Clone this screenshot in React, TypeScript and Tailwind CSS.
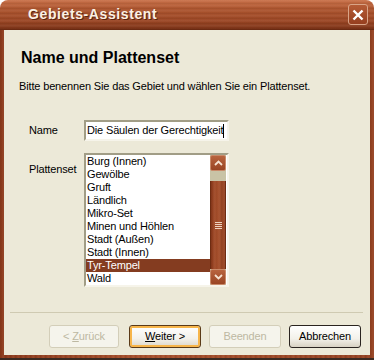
const items = [
  "Burg (Innen)",
  "Gewölbe",
  "Gruft",
  "Ländlich",
  "Mikro-Set",
  "Minen und Höhlen",
  "Stadt (Außen)",
  "Stadt (Innen)",
  "Tyr-Tempel",
  "Wald",
];

const wood =
  "bg-[repeating-linear-gradient(90deg,rgba(0,0,0,0.08)_0px,rgba(0,0,0,0)_2px,rgba(255,255,255,0.06)_3px,rgba(0,0,0,0)_5px),linear-gradient(90deg,#8c3a1c,#a8502c_40%,#954222)]";

const Arrow = ({ up }: { up?: boolean }) => (
  <div className="h-[16px] w-[16px] rounded-[2px] border border-[#c98a6a] bg-[linear-gradient(#b8643f,#9a4524)] flex items-center justify-center">
    <svg width="9" height="6" viewBox="0 0 9 6">
      <path
        d={up ? "M1 5 L4.5 1.5 L8 5" : "M1 1 L4.5 4.5 L8 1"}
        fill="none"
        stroke="#f6e3d2"
        strokeWidth="1.8"
      />
    </svg>
  </div>
);

const Btn = ({
  children,
  disabled,
  primary,
  w,
}: {
  children: React.ReactNode;
  disabled?: boolean;
  primary?: boolean;
  w: string;
}) => (
  <div
    className={
      "h-[23px] rounded-[3px] border flex items-center justify-center text-[11px] " +
      w +
      (disabled
        ? " border-[#d3ceb9] bg-[#f5f4ec] text-[#bdb8a2]"
        : primary
        ? " border-[#5a3a18] bg-[linear-gradient(#ffffff,#f3f1ea_60%,#dcd6c8)] text-black shadow-[inset_0_0_0_2px_#f7b54a]"
        : " border-[#2a2420] bg-[linear-gradient(#ffffff,#f3f1ea_60%,#d8d2c3)] text-black")
    }
  >
    <span className="whitespace-pre">{children}</span>
  </div>
);

export default function App() {
  return (
    <div className="w-[374px] h-[360px] bg-white flex flex-col font-['Liberation_Sans',Arial,sans-serif]">
      <div className="h-[358px] flex flex-col rounded-t-[8px] overflow-hidden">
        {/* title bar */}
        <div className="h-[30px] shrink-0 flex items-center pl-[28px] pr-[6px] border-b border-[#6a2a12] bg-[repeating-linear-gradient(0deg,rgba(0,0,0,0.07)_0px,rgba(0,0,0,0)_2px,rgba(255,255,255,0.07)_3px,rgba(0,0,0,0)_5px),linear-gradient(#c97149,#ad552f_30%,#9c4725_70%,#7d3418)]">
          <span className="flex-1 text-[14px] font-bold tracking-[0.6px] text-[#fbf1e4] [text-shadow:1px_1px_0_#5a2410]">
            Gebiets-Assistent
          </span>
          <div className="w-[20px] h-[21px] rounded-[3px] border border-[#d9a487] bg-[linear-gradient(#b55c36,#963f1f)] flex items-center justify-center">
            <svg width="12" height="12" viewBox="0 0 12 12">
              <path
                d="M1.5 1.5 L10.5 10.5 M10.5 1.5 L1.5 10.5"
                stroke="#ffffff"
                strokeWidth="2.4"
              />
            </svg>
          </div>
        </div>

        {/* body with wooden frame */}
        <div className={"flex-1 flex flex-col px-[4px] pb-[3px] " + wood}>
          <div className="flex-1 flex flex-col bg-[#ece9d8] text-[11px] tracking-[-0.15px] text-black">
            <div className="pl-[17px] pt-[19px] text-[16px] leading-[18px] tracking-normal font-bold">
              Name und Plattenset
            </div>
            <div className="pl-[15px] mt-[13px] leading-[13px]">
              Bitte benennen Sie das Gebiet und wählen Sie ein Plattenset.
            </div>

            <div className="flex mt-[27px] pl-[25px]">
              <div className="w-[55px] leading-[21px]">Name</div>
              <div className="w-[145px] h-[21px] border-2 border-t-[#a19d86] border-l-[#a19d86] border-b-[#f6f4ea] border-r-[#f6f4ea] bg-white flex items-center pl-[1px] leading-[13px] whitespace-nowrap overflow-hidden">
                <span>Die Säulen der Gerechtigkeit</span>
                <span className="inline-block shrink-0 w-[1px] h-[14px] bg-black" />
              </div>
            </div>

            <div className="flex mt-[12px] pl-[25px]">
              <div className="w-[55px] pt-[10px] leading-[13px]">Plattenset</div>
              <div className="w-[145px] h-[134px] border-2 border-t-[#a19d86] border-l-[#a19d86] border-b-[#f6f4ea] border-r-[#f6f4ea] bg-white flex">
                <div className="flex-1 flex flex-col">
                  {items.map((it) => (
                    <div
                      key={it}
                      className={
                        "h-[13px] leading-[13px] pl-[1px] whitespace-nowrap " +
                        (it === "Tyr-Tempel"
                          ? "bg-[#843c20] text-white"
                          : "")
                      }
                    >
                      {it}
                    </div>
                  ))}
                </div>
                <div className="w-[16px] flex flex-col bg-[#c9c3a6] mr-[1px]">
                  <Arrow up />
                  <div className="h-[10px]" />
                  <div
                    className={
                      "flex-1 border-x border-[#6e2c12] flex items-center justify-center " +
                      wood
                    }
                  >
                    <div className="flex flex-col gap-[1px]">
                      <div className="w-[7px] h-[1px] bg-[#eed2bf]" />
                      <div className="w-[7px] h-[1px] bg-[#eed2bf]" />
                      <div className="w-[7px] h-[1px] bg-[#eed2bf]" />
                      <div className="w-[7px] h-[1px] bg-[#eed2bf]" />
                    </div>
                  </div>
                  <Arrow />
                </div>
              </div>
            </div>

            <div className="mt-[25px] ml-[6px] mr-[7px] h-[1px] bg-[#cfcab2]" />
            <div className="flex mt-[12px] pl-[45px]">
              <Btn disabled w="w-[70px]">
                &lt; <span className="underline">Z</span>urück
              </Btn>
              <div className="w-[10px]" />
              <Btn primary w="w-[72px]">
                <span className="underline">W</span>eiter &gt;
              </Btn>
              <div className="w-[8px]" />
              <Btn disabled w="w-[72px]">
                Beenden
              </Btn>
              <div className="w-[8px]" />
              <Btn w="w-[72px]">Abbrechen</Btn>
            </div>
          </div>
        </div>
      </div>
      <div className="h-[2px] bg-[#3a2a22]" />
    </div>
  );
}
